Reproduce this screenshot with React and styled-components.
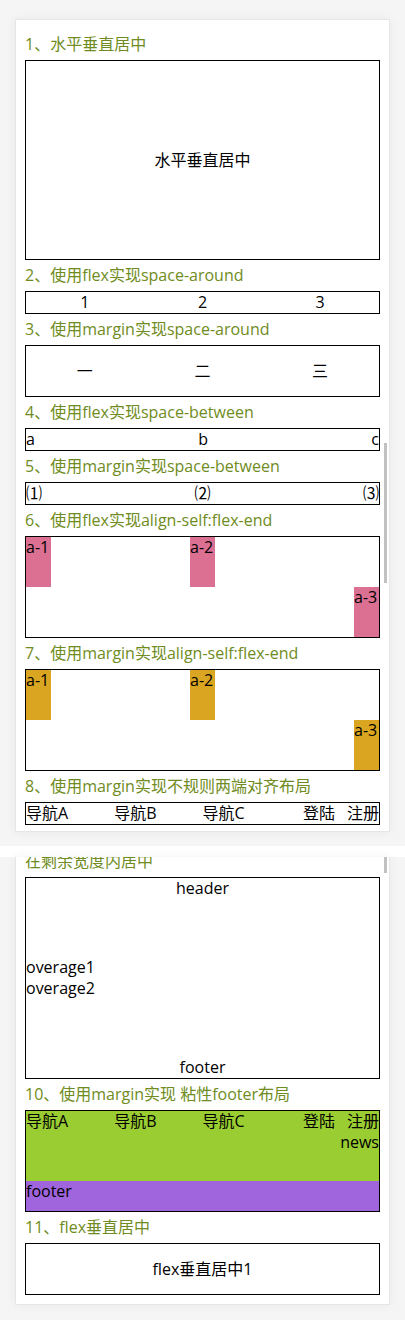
import React from "react";
import styled, { createGlobalStyle } from "styled-components";

const GlobalStyle = createGlobalStyle`
  html, body {
    margin: 0;
    padding: 0;
    background: #f5f5f5;
  }
  body {
    font-family: "Open Sans", "Noto Sans CJK SC", sans-serif;
    font-size: 16px;
    color: #000;
  }
  * {
    box-sizing: border-box;
  }
`;

const Screen = styled.div`
  background: #f5f5f5;
  padding: ${(p) => p.$top}px 15px ${(p) => p.$bottom}px;
`;

const Strip = styled.div`
  height: 11px;
  background: #fff;
`;

const Card = styled.div`
  position: relative;
  background: #fff;
  border: 1px solid #e6e6e6;
  box-shadow: 0 0 10px rgba(0, 0, 0, 0.06);
  overflow: hidden;
  height: ${(p) => (p.$height ? `${p.$height}px` : "auto")};
  padding: 9px 9px 9px;
  ${(p) => p.$clipTop && "border-top: none; padding-top: 0;"}
`;

const Thumb = styled.div`
  position: absolute;
  right: 2px;
  width: 3px;
  background: #c1c1c1;
  top: ${(p) => p.$top}px;
  height: ${(p) => p.$h}px;
`;

const Heading = styled.h3`
  margin: ${(p) => (p.$clipped ? "-6px 0 5px" : "5px 0")};
  font-size: 16px;
  font-weight: normal;
  line-height: 21px;
  color: #6f8c22;
  white-space: nowrap;
`;

const Box = styled.div`
  border: 1px solid #000;
  height: ${(p) => p.$h}px;
  line-height: 21px;
  display: flex;
`;

const CenterBox = styled(Box)`
  align-items: center;
  justify-content: center;
`;

const AroundBox = styled(Box)`
  justify-content: space-around;
`;

const MarginAroundItem = styled.div`
  margin: 0 auto;
  line-height: 50px;
`;

const BetweenBox = styled(Box)`
  justify-content: space-between;
`;

const MarginBetweenItem = styled.div`
  &:nth-child(2) {
    margin: 0 auto;
  }
`;

const AlignBox = styled(Box)`
  justify-content: space-between;
  align-items: flex-start;
`;

const Block = styled.div`
  width: 25px;
  height: 50px;
  background: ${(p) => p.$color};
  white-space: nowrap;
  ${(p) => p.$end && "align-self: flex-end;"}
`;

const MarginBlock = styled(Block)`
  &:nth-child(2) {
    margin: 0 auto;
  }
  ${(p) => p.$end && "align-self: auto; margin-top: auto;"}
`;

const Nav = styled.div`
  display: flex;
  width: 100%;
  line-height: 21px;
`;

const NavItem = styled.div`
  flex: 0 0 25%;
`;

const NavRight = styled.div`
  margin-left: ${(p) => (p.$auto ? "auto" : "12px")};
`;

const ColumnBox = styled(Box)`
  flex-direction: column;
`;

const Header = styled.div`
  text-align: center;
`;

const Overage = styled.div`
  margin: auto 0;
`;

const Main = styled.div`
  flex: 1;
  background: #9acd32;
`;

const News = styled.div`
  text-align: right;
`;

const Footer = styled.div`
  height: 30px;
  background: #a064dc;
`;

const navs = ["导航A", "导航B", "导航C"];

const NavRow = () => (
  <Nav>
    {navs.map((n) => (
      <NavItem key={n}>{n}</NavItem>
    ))}
    <NavRight $auto>登陆</NavRight>
    <NavRight>注册</NavRight>
  </Nav>
);

const App = () => {
  return (
    <>
      <GlobalStyle />
      <Screen $top={19} $bottom={14}>
        <Card $height={813}>
          <Thumb $top={423} $h={140} />
          <Heading>1、水平垂直居中</Heading>
          <CenterBox $h={200}>水平垂直居中</CenterBox>

          <Heading>2、使用flex实现space-around</Heading>
          <AroundBox $h={23}>
            <div>1</div>
            <div>2</div>
            <div>3</div>
          </AroundBox>

          <Heading>3、使用margin实现space-around</Heading>
          <Box $h={52}>
            <MarginAroundItem>一</MarginAroundItem>
            <MarginAroundItem>二</MarginAroundItem>
            <MarginAroundItem>三</MarginAroundItem>
          </Box>

          <Heading>4、使用flex实现space-between</Heading>
          <BetweenBox $h={23}>
            <div>a</div>
            <div>b</div>
            <div>c</div>
          </BetweenBox>

          <Heading>5、使用margin实现space-between</Heading>
          <Box $h={23}>
            <MarginBetweenItem>⑴</MarginBetweenItem>
            <MarginBetweenItem>⑵</MarginBetweenItem>
            <MarginBetweenItem>⑶</MarginBetweenItem>
          </Box>

          <Heading>6、使用flex实现align-self:flex-end</Heading>
          <AlignBox $h={102}>
            <Block $color="#db7093">a-1</Block>
            <Block $color="#db7093">a-2</Block>
            <Block $color="#db7093" $end>a-3</Block>
          </AlignBox>

          <Heading>7、使用margin实现align-self:flex-end</Heading>
          <Box $h={102}>
            <MarginBlock $color="#daa520">a-1</MarginBlock>
            <MarginBlock $color="#daa520">a-2</MarginBlock>
            <MarginBlock $color="#daa520" $end>a-3</MarginBlock>
          </Box>

          <Heading>8、使用margin实现不规则两端对齐布局</Heading>
          <Box $h={23}>
            <NavRow />
          </Box>
        </Card>
      </Screen>

      <Strip />

      <Screen $top={0} $bottom={15}>
        <Card $clipTop>
          <Thumb $top={0} $h={16} />
          <Heading $clipped>在剩余宽度内居中</Heading>
          <ColumnBox $h={202}>
            <Header>header</Header>
            <Overage>
              overage1
              <br />
              overage2
            </Overage>
            <Header>footer</Header>
          </ColumnBox>

          <Heading>10、使用margin实现 粘性footer布局</Heading>
          <ColumnBox $h={102}>
            <Main>
              <NavRow />
              <News>news</News>
            </Main>
            <Footer>footer</Footer>
          </ColumnBox>

          <Heading>11、flex垂直居中</Heading>
          <CenterBox $h={52}>flex垂直居中1</CenterBox>
        </Card>
      </Screen>
    </>
  );
};

export default App;
